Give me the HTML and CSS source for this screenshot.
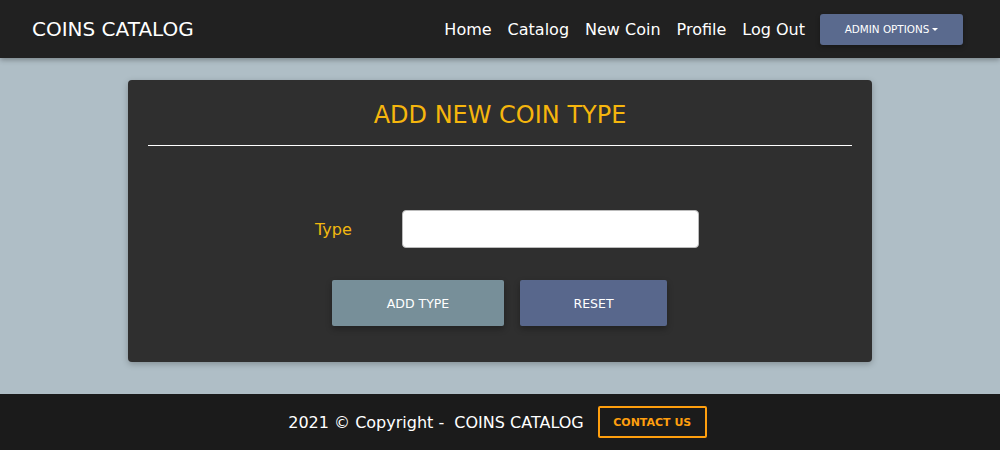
FILE: index.html
```html
<!DOCTYPE html>
<html lang="en">
<head>
<meta charset="utf-8">
<title>Coins Catalog</title>
<link rel="stylesheet" href="styles.css">
</head>
<body>
<header class="navbar">
  <a class="brand" href="#">COINS CATALOG</a>
  <nav class="nav">
    <a class="nav-link" href="#">Home</a>
    <a class="nav-link" href="#">Catalog</a>
    <a class="nav-link" href="#">New Coin</a>
    <a class="nav-link" href="#">Profile</a>
    <a class="nav-link" href="#">Log Out</a>
    <button class="admin-btn" type="button">ADMIN OPTIONS<span class="caret"></span></button>
  </nav>
</header>
<main class="main">
  <section class="card">
    <h1 class="card-title">ADD NEW COIN TYPE</h1>
    <hr class="divider">
    <form class="form">
      <div class="form-row">
        <label class="label" for="type">Type</label>
        <input class="input" id="type" type="text">
      </div>
      <div class="actions">
        <button class="btn btn-add" type="button">ADD TYPE</button>
        <button class="btn btn-reset" type="reset">RESET</button>
      </div>
    </form>
  </section>
</main>
<footer class="footer">
  <span class="copy">2021 © Copyright -&nbsp; COINS CATALOG</span>
  <a class="contact" href="#">CONTACT US</a>
</footer>
</body>
</html>
```
FILE: styles.css
```css
* { box-sizing: border-box; }
html, body { height: 100%; }
body {
  margin: 0;
  font-family: "DejaVu Sans", sans-serif;
  background: #afbec6;
  display: flex;
  flex-direction: column;
  min-height: 450px;
}
a { text-decoration: none; }

.navbar {
  height: 58px;
  background: #212121;
  display: flex;
  align-items: center;
  justify-content: space-between;
  padding: 0 37px 0 32px;
  box-shadow: 0 2px 5px rgba(0,0,0,0.3);
  position: relative;
  z-index: 1;
}
.brand {
  color: #fff;
  font-size: 20px;
}
.nav {
  display: flex;
  align-items: center;
}
.nav-link {
  color: #fff;
  font-size: 16px;
  padding: 0 8px;
}
.nav-link:first-child { padding-left: 0; }
.admin-btn {
  margin-left: 7px;
  width: 143px;
  height: 31px;
  background: #5a6a8e;
  border: none;
  border-radius: 3px;
  color: #fff;
  font-family: "DejaVu Sans", sans-serif;
  font-size: 10.4px;
  display: flex;
  align-items: center;
  justify-content: center;
  box-shadow: 0 2px 5px rgba(0,0,0,0.3);
  padding: 0;
}
.caret {
  display: inline-block;
  margin-left: 3px;
  width: 0;
  height: 0;
  border-left: 3.5px solid transparent;
  border-right: 3.5px solid transparent;
  border-top: 3.5px solid #fff;
}

.main {
  flex: 1;
  display: flex;
  justify-content: center;
  padding-top: 22px;
}
.card {
  width: 744px;
  height: 282px;
  background: #2f2f2f;
  border-radius: 4px;
  padding: 0 20px;
  box-shadow: 0 2px 6px rgba(0,0,0,0.25);
}
.card-title {
  margin: 0;
  padding-top: 21px;
  height: 65px;
  text-align: center;
  color: #f6b60d;
  font-weight: normal;
  font-size: 24px;
  line-height: 28px;
}
.divider {
  margin: 0;
  border: none;
  border-top: 1px solid #fff;
}
.form {
  display: flex;
  flex-direction: column;
  align-items: center;
  padding-top: 64px;
}
.form-row {
  display: flex;
  align-items: center;
  margin-left: 14px;
}
.label {
  color: #f2b80f;
  font-size: 16px;
  width: 87px;
}
.input {
  width: 297px;
  height: 38px;
  border: 1px solid #bbb;
  border-radius: 4px;
  background: #fff;
}
.actions {
  display: flex;
  gap: 16px;
  margin-top: 32px;
  margin-left: -1px;
}
.btn {
  height: 46px;
  border: none;
  border-radius: 2px;
  color: #fff;
  font-family: "DejaVu Sans", sans-serif;
  font-size: 12.5px;
  box-shadow: 0 3px 6px rgba(0,0,0,0.3);
}
.btn-add { width: 172px; background: #778f99; }
.btn-reset { width: 147px; background: #58678c; }

.footer {
  height: 56px;
  background: #1b1b1b;
  display: flex;
  align-items: center;
  justify-content: center;
  gap: 14px;
  padding-right: 5px;
}
.copy {
  color: #fff;
  font-size: 16px;
}
.contact {
  width: 109px;
  height: 32px;
  border: 2px solid #ff9f0e;
  border-radius: 2px;
  color: #ff9f0e;
  font-weight: bold;
  font-size: 11px;
  display: flex;
  align-items: center;
  justify-content: center;
}
```
